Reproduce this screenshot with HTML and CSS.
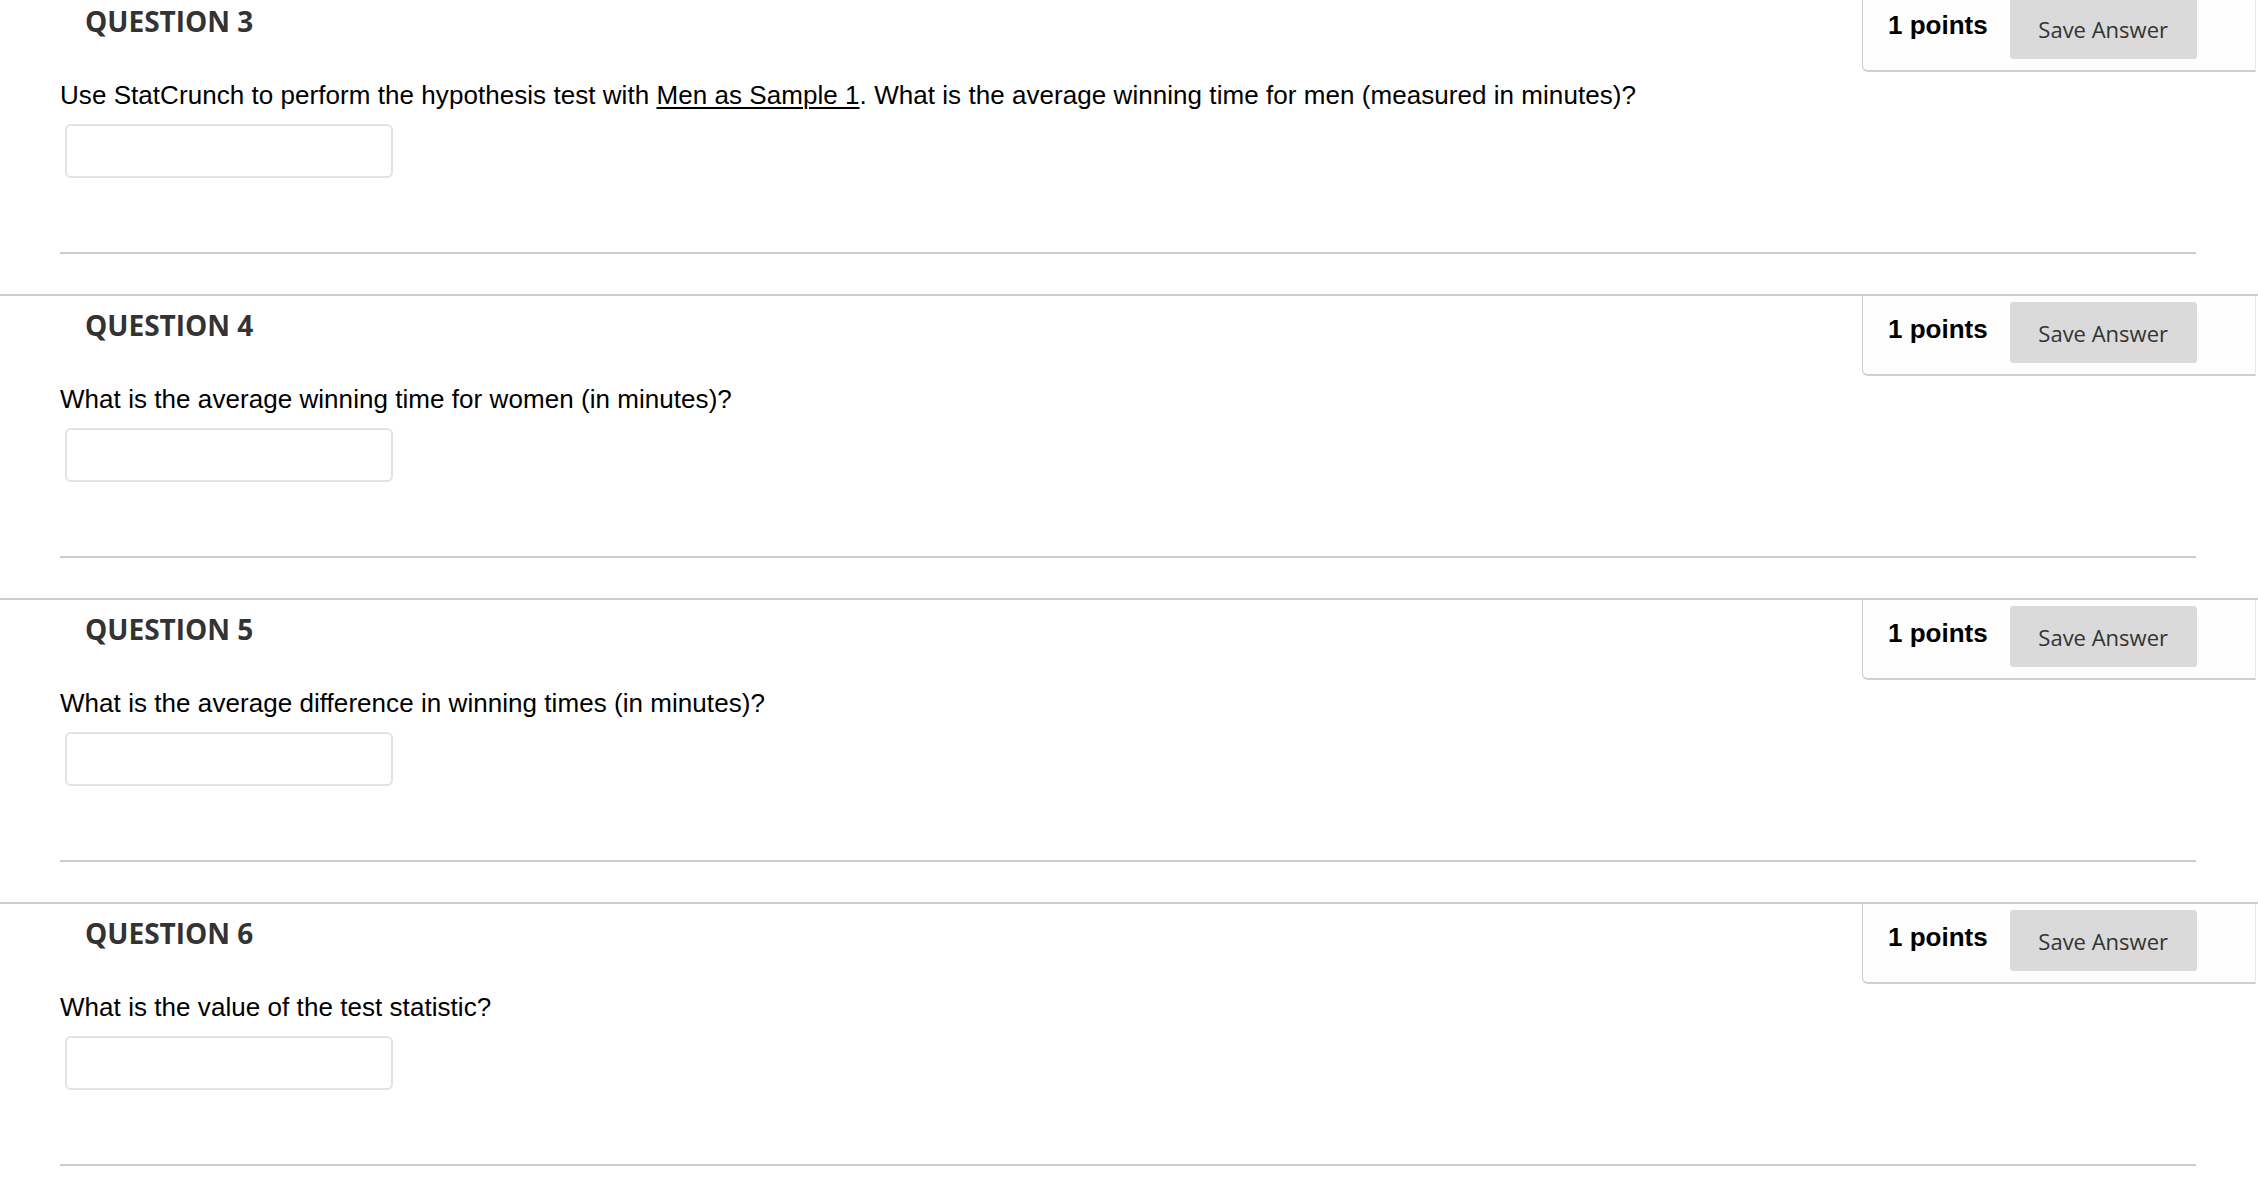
FILE: index.html
```html
<!DOCTYPE html>
<html lang="en">
<head>
<meta charset="utf-8">
<title>Questions</title>
<link rel="stylesheet" href="styles.css">
</head>
<body>
<div class="page">
  <section class="question">
    <div class="q-head">
      <h3 class="q-title">QUESTION 3</h3>
      <div class="q-points">
        <span class="pts">1 points</span>
        <button class="save">Save Answer</button>
      </div>
    </div>
    <p class="q-text">Use StatCrunch to perform the hypothesis test with <u>Men as Sample 1</u>. What is the average winning time for men (measured in minutes)?</p>
    <input class="answer" type="text">
    <hr class="q-rule">
  </section>
  <section class="question">
    <div class="q-head">
      <h3 class="q-title">QUESTION 4</h3>
      <div class="q-points">
        <span class="pts">1 points</span>
        <button class="save">Save Answer</button>
      </div>
    </div>
    <p class="q-text">What is the average winning time for women (in minutes)?</p>
    <input class="answer" type="text">
    <hr class="q-rule">
  </section>
  <section class="question">
    <div class="q-head">
      <h3 class="q-title">QUESTION 5</h3>
      <div class="q-points">
        <span class="pts">1 points</span>
        <button class="save">Save Answer</button>
      </div>
    </div>
    <p class="q-text">What is the average difference in winning times (in minutes)?</p>
    <input class="answer" type="text">
    <hr class="q-rule">
  </section>
  <section class="question">
    <div class="q-head">
      <h3 class="q-title">QUESTION 6</h3>
      <div class="q-points">
        <span class="pts">1 points</span>
        <button class="save">Save Answer</button>
      </div>
    </div>
    <p class="q-text">What is the value of the test statistic?</p>
    <input class="answer" type="text">
    <hr class="q-rule">
  </section>
</div>
</body>
</html>
```
FILE: styles.css
```css
html, body {
  margin: 0;
  padding: 0;
  background: #ffffff;
}

.page {
  margin-top: -10px;
  font-family: "Liberation Sans", Arial, sans-serif;
  color: #000;
}

.question {
  border-top: 2px solid #cdcdcd;
  padding: 0 62px 40px 60px;
}

.q-head {
  display: flex;
  justify-content: space-between;
  align-items: flex-start;
}

.q-title {
  margin: 10px 0 0 25px;
  font-family: "Open Sans", sans-serif;
  font-weight: 700;
  font-size: 28px;
  line-height: 38px;
  color: #333333;
}

.q-points {
  box-sizing: border-box;
  width: 394px;
  margin-right: -60px;
  display: flex;
  align-items: center;
  gap: 22px;
  padding: 6px 0 11px 25px;
  border-left: 1px solid #cfcfcf;
  border-right: 1px solid #e6e6e6;
  border-bottom: 2px solid #cfcfcf;
  border-bottom-left-radius: 6px;
  background: #fefefe;
}

.pts {
  margin-bottom: 8px;
  font-family: "Liberation Sans", Arial, sans-serif;
  font-weight: 700;
  font-size: 26px;
  line-height: 30px;
  color: #000;
}

.save {
  width: 187px;
  height: 61px;
  border: none;
  border-radius: 3px;
  background: #dadada;
  font-family: "Open Sans", sans-serif;
  font-size: 22px;
  color: #333333;
  padding: 0;
}

.q-text {
  margin: 8px 0 0 0;
  font-size: 26px;
  line-height: 30px;
  letter-spacing: 0.05px;
  color: #000;
}

.q-text u {
  text-decoration-thickness: 2px;
  text-underline-offset: 3px;
}

.answer {
  display: block;
  box-sizing: border-box;
  width: 328px;
  height: 54px;
  margin: 14px 0 0 5px;
  border: 2px solid #e2e2e2;
  border-radius: 6px;
  background: #fff;
  outline: none;
}

.q-rule {
  margin: 74px 0 0 0;
  border: 0;
  height: 2px;
  background: #cdcdcd;
}
```
